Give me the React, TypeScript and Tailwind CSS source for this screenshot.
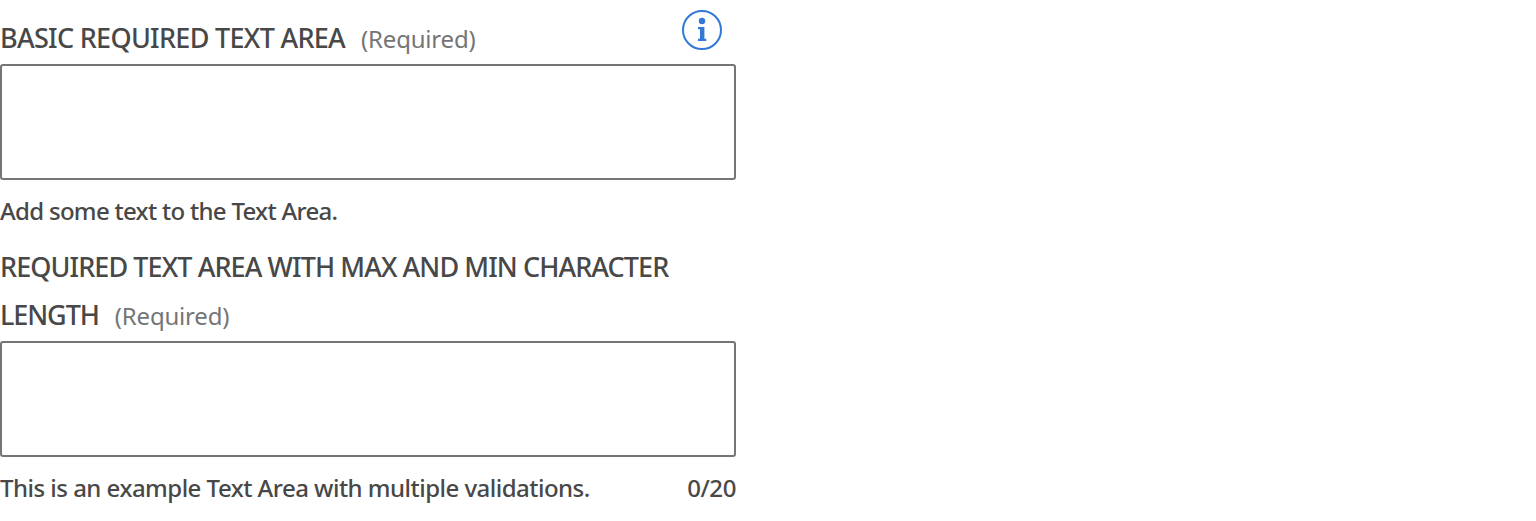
import React from "react";

function InfoIcon() {
  return (
    <svg width="40" height="40" viewBox="0 0 40 40" fill="none" aria-hidden="true">
      <circle cx="20" cy="20" r="19" stroke="#3278d6" strokeWidth="2" />
      <circle cx="20" cy="11" r="3.2" fill="#3278d6" />
      <path d="M16 17H22.4V28.8H24.3V31H16V28.8H18V19.2H16Z" fill="#3278d6" />
    </svg>
  );
}

function RequiredMark() {
  return <span className="ml-4 text-[24px] font-normal tracking-[-0.2px] text-[#757575]">(Required)</span>;
}

export default function App() {
  return (
    <main className="h-[521px] w-full bg-white font-['Noto_Sans',sans-serif] font-medium text-[#484848]">
      <form className="w-[736px]">
        <div className="flex h-[64px] items-start justify-between pr-[14px]">
          <label htmlFor="basic" className="whitespace-nowrap pt-[14px] text-[27px] leading-[48px]">
            <span className="tracking-[-0.7px]">BASIC REQUIRED TEXT AREA</span>
            <RequiredMark />
          </label>
          <button type="button" className="mt-[10px]" aria-label="Information"><InfoIcon /></button>
        </div>
        <textarea id="basic" className="block h-[116px] w-full resize-none rounded-[3px] border-2 border-[#757575]" />
        <p className="h-[64px] pt-[7px] text-[24px] leading-[48px] tracking-[-0.7px]">Add some text to the Text Area.</p>
        <label htmlFor="limits" className="-mt-px block h-[98px] text-[27px] leading-[48px]">
          <span className="block whitespace-nowrap tracking-[-0.92px]">REQUIRED TEXT AREA WITH MAX AND MIN CHARACTER</span>
          <span className="tracking-[-1.1px]">LENGTH</span>
          <RequiredMark />
        </label>
        <textarea id="limits" className="block h-[116px] w-full resize-none rounded-[3px] border-2 border-[#757575]" />
        <div className="flex justify-between pt-[7px] text-[24px] leading-[48px] tracking-[-0.52px]">
          <span>This is an example Text Area with multiple validations.</span><span className="tracking-[-0.4px]">0/20</span>
        </div>
      </form>
    </main>
  );
}
